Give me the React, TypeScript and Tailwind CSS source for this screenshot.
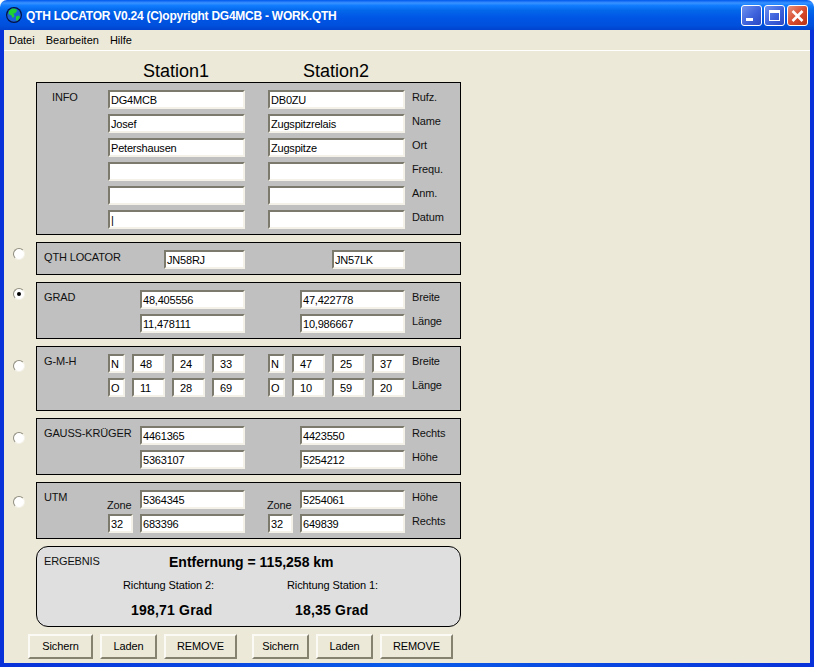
import React from "react";

const font = { fontFamily: '"Liberation Sans", Arial, sans-serif' };

function F({ w, v = "", cls = "pl-[1px]" }: { w: string; v?: string; cls?: string }) {
  return (
    <div className={`${w} h-[19px] shrink-0 bg-white border-2 border-t-[#7c7a6c] border-l-[#7c7a6c] border-b-[#f4f2e8] border-r-[#f4f2e8] text-[11px] tracking-[-0.2px] leading-[16px] text-black whitespace-pre overflow-hidden ${cls}`}>
      {v}
    </div>
  );
}

function Label({ children, cls = "" }: { children: React.ReactNode; cls?: string }) {
  return <div className={`text-[11px] tracking-[-0.15px] leading-[14px] text-[#111] whitespace-pre ${cls}`}>{children}</div>;
}

function Radio({ top, checked = false }: { top: string; checked?: boolean }) {
  return (
    <div className="w-[32px] shrink-0 pl-[9px]">
      <div className={`${top} w-[12px] h-[12px] rounded-full bg-white border border-t-[#8f8d7e] border-l-[#8f8d7e] border-b-[#f4f2e8] border-r-[#f4f2e8] flex items-center justify-center`}>
        {checked && <div className="w-[4px] h-[4px] rounded-full bg-black" />}
      </div>
    </div>
  );
}

function Panel({ h, children }: { h: string; children: React.ReactNode }) {
  return <div className={`${h} w-[425px] border border-black bg-[#c0c0c0] box-border`}>{children}</div>;
}

function Btn({ w, children }: { w: string; children: React.ReactNode }) {
  return (
    <div className={`${w} h-[25px] shrink-0 bg-[#ece9d8] border-2 border-t-[#fbfaf4] border-l-[#fbfaf4] border-b-[#85826f] border-r-[#85826f] flex items-center justify-center text-[11px] tracking-[-0.1px] text-black`}>
      {children}
    </div>
  );
}

function Globe() {
  return (
    <svg width="16" height="16" viewBox="0 0 16 16" className="shrink-0">
      <circle cx="8" cy="8" r="8" fill="#04123f" />
      <circle cx="8" cy="8" r="6.8" fill="#1a5fd6" />
      <path d="M3 4 L6 1.6 L10 2 L11 4 L9 6.5 L7.5 6 L8.5 9.5 L6.5 11 L5.5 8.5 L2.5 7 Z" fill="#1fd12f" />
      <path d="M10 9.5 L13 8.5 L14 10.5 L11 14 L10 12.5 Z" fill="#1fd12f" />
    </svg>
  );
}

function CapBtn({ kind }: { kind: "min" | "max" | "close" }) {
  const bg =
    kind === "close"
      ? "bg-[linear-gradient(135deg,#e8917a,#d8492b_55%,#b83215)]"
      : "bg-[linear-gradient(135deg,#6f92ee,#3d62dc_55%,#2a47c4)]";
  return (
    <div className={`w-[21px] h-[21px] rounded-[3px] border border-white ${bg} flex items-center justify-center`}>
      <svg width="19" height="19" viewBox="0 0 19 19">
        {kind === "min" && <rect x="4" y="12" width="7" height="3" fill="#fff" />}
        {kind === "max" && (
          <>
            <rect x="4.5" y="4.5" width="10" height="10" fill="none" stroke="#fff" />
            <rect x="4" y="4" width="11" height="3" fill="#fff" />
          </>
        )}
        {kind === "close" && <path d="M4.5 5 L14.5 15 M14.5 5 L4.5 15" stroke="#fff" strokeWidth="2.6" />}
      </svg>
    </div>
  );
}

export default function App() {
  return (
    <div className="w-[814px] h-[667px] flex flex-col overflow-hidden bg-white" style={font}>
      <div className="h-[30px] shrink-0 flex items-center pl-[6px] pr-[6px] gap-[4px] rounded-t-[7px] bg-[linear-gradient(180deg,#0058ee_0%,#3a93ff_10%,#127dff_18%,#0367ea_35%,#0055e5_60%,#0050dc_85%,#0043cf_100%)]">
        <Globe />
        <div className="pt-[2px] text-[12px] tracking-[-0.25px] font-bold text-white whitespace-pre flex-1">QTH LOCATOR V0.24 (C)opyright DG4MCB - WORK.QTH</div>
        <div className="flex gap-[2px]">
          <CapBtn kind="min" />
          <CapBtn kind="max" />
          <CapBtn kind="close" />
        </div>
      </div>
      <div className="flex-1 flex flex-col px-[4px] pb-[4px] bg-[linear-gradient(90deg,#0831d9,#0a5be8_50%,#0831d9)]">
        <div className="flex-1 bg-[#ece9d8] flex flex-col">
          <div className="h-[21px] shrink-0 border-b border-white flex items-center pl-[5px] gap-[11px] text-[11px] text-black">
            <span>Datei</span>
            <span>Bearbeiten</span>
            <span>Hilfe</span>
          </div>
          <div className="flex pl-[139px] pt-[9px] h-[31px] text-[18px] leading-[22px] text-black">
            <div className="w-[160px]">Station1</div>
            <div>Station2</div>
          </div>
          <div className="flex flex-col gap-[7px]">
            <div className="flex">
              <div className="w-[32px]" />
              <Panel h="h-[153px]">
                <div className="flex flex-col gap-[5px] pt-[7px]">
                  {[
                    ["DG4MCB", "DB0ZU", "Rufz."],
                    ["Josef", "Zugspitzrelais", "Name"],
                    ["Petershausen", "Zugspitze", "Ort"],
                    ["", "", "Frequ."],
                    ["", "", "Anm."],
                    ["|", "", "Datum"],
                  ].map((r, i) => (
                    <div key={i} className="flex">
                      <Label cls="w-[71px] pl-[15px]">{i === 0 ? "INFO" : ""}</Label>
                      <F w="w-[137px]" v={r[0]} />
                      <div className="w-[23px]" />
                      <F w="w-[137px]" v={r[1]} />
                      <Label cls="pl-[7px]">{r[2]}</Label>
                    </div>
                  ))}
                </div>
              </Panel>
            </div>
            <div className="flex">
              <Radio top="mt-[6px]" />
              <Panel h="h-[33px]">
                <div className="flex pt-[7px]">
                  <Label cls="w-[127px] pl-[7px]">QTH LOCATOR</Label>
                  <F w="w-[81px]" v="JN58RJ" />
                  <div className="w-[87px]" />
                  <F w="w-[73px]" v="JN57LK" />
                </div>
              </Panel>
            </div>
            <div className="flex">
              <Radio top="mt-[6px]" checked />
              <Panel h="h-[57px]">
                <div className="flex flex-col gap-[5px] pt-[7px]">
                  {[
                    ["GRAD", "48,405556", "47,422778", "Breite"],
                    ["", "11,478111", "10,986667", "Länge"],
                  ].map((r, i) => (
                    <div key={i} className="flex">
                      <Label cls="w-[103px] pl-[7px]">{r[0]}</Label>
                      <F w="w-[105px]" v={r[1]} />
                      <div className="w-[55px]" />
                      <F w="w-[105px]" v={r[2]} />
                      <Label cls="pl-[7px]">{r[3]}</Label>
                    </div>
                  ))}
                </div>
              </Panel>
            </div>
            <div className="flex">
              <Radio top="mt-[14px]" />
              <Panel h="h-[65px]">
                <div className="flex flex-col gap-[5px] pt-[7px]">
                  {[
                    ["G-M-H", "N", "48", "24", "33", "N", "47", "25", "37", "Breite"],
                    ["", "O", "11", "28", "69", "O", "10", "59", "20", "Länge"],
                  ].map((r, i) => (
                    <div key={i} className="flex">
                      <Label cls="w-[71px] pl-[7px]">{r[0]}</Label>
                      <F w="w-[17px]" v={r[1]} />
                      <F w="w-[33px] ml-[7px]" v={r[2]} cls="pl-[6px]" />
                      <F w="w-[33px] ml-[7px]" v={r[3]} cls="pl-[6px]" />
                      <F w="w-[33px] ml-[7px]" v={r[4]} cls="pl-[6px]" />
                      <F w="w-[17px] ml-[23px]" v={r[5]} />
                      <F w="w-[33px] ml-[7px]" v={r[6]} cls="pl-[6px]" />
                      <F w="w-[33px] ml-[7px]" v={r[7]} cls="pl-[6px]" />
                      <F w="w-[33px] ml-[7px]" v={r[8]} cls="pl-[6px]" />
                      <Label cls="pl-[7px]">{r[9]}</Label>
                    </div>
                  ))}
                </div>
              </Panel>
            </div>
            <div className="flex">
              <Radio top="mt-[14px]" />
              <Panel h="h-[57px]">
                <div className="flex flex-col gap-[5px] pt-[7px]">
                  {[
                    ["GAUSS-KRÜGER", "4461365", "4423550", "Rechts"],
                    ["", "5363107", "5254212", "Höhe"],
                  ].map((r, i) => (
                    <div key={i} className="flex">
                      <Label cls="w-[103px] pl-[7px]">{r[0]}</Label>
                      <F w="w-[105px]" v={r[1]} />
                      <div className="w-[55px]" />
                      <F w="w-[105px]" v={r[2]} />
                      <Label cls="pl-[7px]">{r[3]}</Label>
                    </div>
                  ))}
                </div>
              </Panel>
            </div>
            <div className="flex">
              <Radio top="mt-[14px]" />
              <Panel h="h-[57px]">
                <div className="flex flex-col gap-[5px] pt-[7px]">
                  <div className="flex h-[19px]">
                    <Label cls="w-[70px] pl-[7px]">UTM</Label>
                    <Label cls="w-[33px] pt-[8px]">Zone</Label>
                    <F w="w-[105px]" v="5364345" />
                    <Label cls="w-[55px] pl-[22px] pt-[8px]">Zone</Label>
                    <F w="w-[105px]" v="5254061" />
                    <Label cls="pl-[7px]">Höhe</Label>
                  </div>
                  <div className="flex">
                    <div className="w-[71px]" />
                    <F w="w-[25px]" v="32" />
                    <F w="w-[105px] ml-[7px]" v="683396" />
                    <F w="w-[25px] ml-[23px]" v="32" />
                    <F w="w-[105px] ml-[7px]" v="649839" />
                    <Label cls="pl-[7px]">Rechts</Label>
                  </div>
                </div>
              </Panel>
            </div>
            <div className="flex">
              <div className="w-[32px]" />
              <div className="w-[425px] h-[81px] border border-black rounded-[12px] bg-[#dfdfdf]">
                <div className="flex pt-[7px]">
                  <Label cls="w-[132px] pl-[7px]">ERGEBNIS</Label>
                  <div className="text-[14px] leading-[16px] font-bold text-black">Entfernung = 115,258 km</div>
                </div>
                <div className="flex pt-[8px] text-[11px] tracking-[-0.1px] leading-[14px] text-black">
                  <div className="w-[86px]" />
                  <div className="w-[164px]">Richtung Station 2:</div>
                  <div>Richtung Station 1:</div>
                </div>
                <div className="flex pt-[10px] text-[14px] tracking-[0.2px] leading-[16px] font-bold text-black">
                  <div className="w-[94px]" />
                  <div className="w-[164px]">198,71 Grad</div>
                  <div>18,35 Grad</div>
                </div>
              </div>
            </div>
            <div className="flex pl-[24px]">
              <div className="flex gap-[7px]">
                <Btn w="w-[65px]">Sichern</Btn>
                <Btn w="w-[57px]">Laden</Btn>
                <Btn w="w-[73px]">REMOVE</Btn>
              </div>
              <div className="flex gap-[7px] ml-[15px]">
                <Btn w="w-[57px]">Sichern</Btn>
                <Btn w="w-[57px]">Laden</Btn>
                <Btn w="w-[73px]">REMOVE</Btn>
              </div>
            </div>
          </div>
        </div>
      </div>
    </div>
  );
}
